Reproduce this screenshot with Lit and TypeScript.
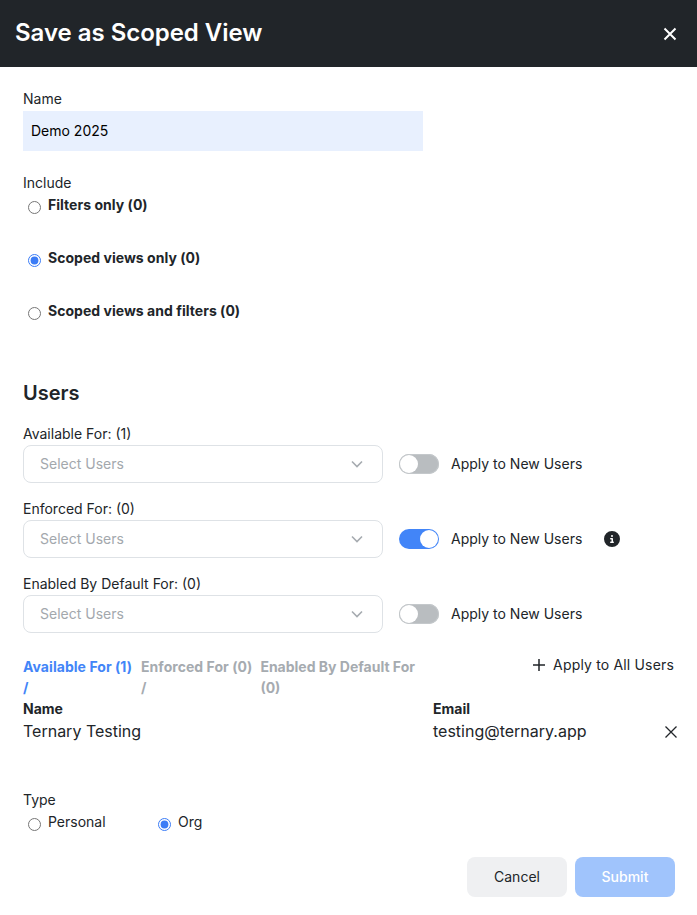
import { LitElement, html, css, svg } from "lit";
import { customElement } from "lit/decorators.js";

const chevron = html`<svg class="chev" width="14" height="14" viewBox="0 0 14 14" fill="none"><path d="M2 4.5 7 9.5 12 4.5" stroke="#a6abb0" stroke-width="1.6"/></svg>`;
const close = (cls: string, w: number) => html`<svg class=${cls} width="14" height="14" viewBox="0 0 14 14" fill="none"><path d="M1.5 1.5 12.5 12.5M12.5 1.5 1.5 12.5" stroke="currentColor" stroke-width=${w}/></svg>`;
const info = svg`<path d="M256 512A256 256 0 1 0 256 0a256 256 0 1 0 0 512zM216 336h24V272H216c-13.3 0-24-10.7-24-24s10.7-24 24-24h48c13.3 0 24 10.7 24 24v88h8c13.3 0 24 10.7 24 24s-10.7 24-24 24H216c-13.3 0-24-10.7-24-24s10.7-24 24-24zm40-208a32 32 0 1 1 0 64 32 32 0 1 1 0-64z" fill="#212529"/>`;

@customElement("app-root")
export class AppRoot extends LitElement {
  static styles = css`
    :host { display: block; font-family: Inter, "Liberation Sans", sans-serif; font-size: 14px; line-height: 21px; color: #212529; background: #fff; height: 915px; overflow: hidden; }
    * { box-sizing: border-box; }
    .head { height: 67px; background: #212529; color: #fff; display: flex; align-items: center; justify-content: space-between; padding: 0 20px 0 15px; }
    .head h1 { margin: 0 0 2px; font-size: 24px; line-height: 36px; font-weight: 600; letter-spacing: -0.03px; }
    .head-x { display: block; }
    .body { padding: 21px 22px 0 23px; }
    .label { display: block; }
    .name-input { display: block; width: 400px; height: 40px; margin-top: 2px; padding: 0 8px 1px; background: #e8f0fe; border: 0; outline: 0; font: inherit; color: #000; }
    .include { margin: 21px 0 1px; }
    .radios { display: flex; flex-direction: column; }
    .radio { display: flex; align-items: flex-start; height: 53px; font-weight: 700; letter-spacing: 0.03px; }
    .radio input, .type-opt input { width: 13px; height: 13px; margin: 7px 7px 0 5px; accent-color: #3b7cf6; flex: none; }
    .users { margin: 25px 0 15px; font-size: 20px; line-height: 30px; font-weight: 600; }
    .group { margin-bottom: 15px; }
    .group .label { margin-bottom: 1px; }
    .field { display: flex; align-items: center; }
    .select { width: 360px; height: 38px; border: 1px solid #dee2e6; border-radius: 8px; display: flex; align-items: center; justify-content: space-between; padding: 0 18px 0 16px; color: #a3a8ad; }
    .raised { padding-bottom: 2px; }
    .chev { display: block; }
    .toggle { width: 40px; height: 20px; margin: 0 12px 0 16px; border-radius: 10px; background: #b9bdc0; padding: 1px; display: flex; flex: none; }
    .toggle i { display: block; width: 18px; height: 18px; border-radius: 50%; background: #fff; }
    .toggle.off { box-shadow: inset 0 0 0 1px #c4c8cb; }
    .toggle.on { background: #4285f8; justify-content: flex-end; }
    .info { margin-left: 22px; display: block; }
    .tabs-row { display: flex; justify-content: space-between; margin-top: 23px; }
    .tabs { display: flex; gap: 9px; font-weight: 700; color: #a6abb0; letter-spacing: 0.05px; }
    .tab.active { color: #4285f8; }
    .tab.last { width: 160px; margin-left: -1px; letter-spacing: 0; }
    .all { display: flex; align-items: center; gap: 8px; height: 21px; margin: -2px 1px 0 0; letter-spacing: 0.17px; }
    .plus { display: block; }
    .table { display: grid; grid-template-columns: 410px 1fr 14px; margin-right: -3px; }
    .th { font-weight: 700; }
    .td { font-size: 16px; line-height: 24px; }
    .row-x { align-self: center; display: block; color: #212529; margin-top: 1px; }
    .type { margin-top: 46px; margin-bottom: 1px; }
    .type-opts { display: flex; }
    .type-opt { display: flex; align-items: flex-start; width: 130px; }
    .actions { display: flex; justify-content: flex-end; gap: 8px; margin-top: 25px; }
    button { width: 100px; height: 40px; border: 0; border-radius: 8px; font: inherit; padding: 0 0 1px; }
    .cancel { background: #eff0f2; color: #212529; }
    .submit { background: #a0c4fc; color: #fff; font-weight: 500; }
  `;

  private group(label: string, on: boolean, withInfo = false) {
    return html`<div class="group">
      <span class="label">${label}</span>
      <div class="field">
        <div class="select"><span class="raised">Select Users</span>${chevron}</div>
        <span class=${on ? "toggle on" : "toggle off"}><i></i></span>
        <span class="raised">Apply to New Users</span>
        ${withInfo ? html`<svg class="info" width="16" height="16" viewBox="0 0 512 512">${info}</svg>` : ""}
      </div>
    </div>`;
  }

  render() {
    return html`
      <div class="head"><h1>Save as Scoped View</h1>${close("head-x", 2)}</div>
      <div class="body">
        <label class="label">Name</label>
        <input class="name-input" .value=${"Demo 2025"} />
        <div class="include label">Include</div>
        <div class="radios">
          <label class="radio"><input type="radio" name="inc" />Filters only (0)</label>
          <label class="radio"><input type="radio" name="inc" checked />Scoped views only (0)</label>
          <label class="radio"><input type="radio" name="inc" />Scoped views and filters (0)</label>
        </div>
        <div class="users">Users</div>
        ${this.group("Available For: (1)", false)}
        ${this.group("Enforced For: (0)", true, true)}
        ${this.group("Enabled By Default For: (0)", false)}
        <div class="tabs-row">
          <div class="tabs">
            <div class="tab active">Available For (1)<br />/</div>
            <div class="tab">Enforced For (0)<br />/</div>
            <div class="tab last">Enabled By Default For (0)</div>
          </div>
          <div class="all">
            <svg class="plus" width="12" height="12" viewBox="0 0 12 12"><path d="M6 0V12M0 6H12" stroke="#212529" stroke-width="1.5"/></svg>
            <span>Apply to All Users</span>
          </div>
        </div>
        <div class="table">
          <div class="th">Name</div><div class="th">Email</div><div></div>
          <div class="td">Ternary Testing</div><div class="td">testing@ternary.app</div>${close("row-x", 1.3)}
        </div>
        <div class="type label">Type</div>
        <div class="type-opts">
          <label class="type-opt"><input type="radio" name="type" />Personal</label>
          <label class="type-opt"><input type="radio" name="type" checked />Org</label>
        </div>
        <div class="actions">
          <button class="cancel">Cancel</button>
          <button class="submit">Submit</button>
        </div>
      </div>
    `;
  }
}
